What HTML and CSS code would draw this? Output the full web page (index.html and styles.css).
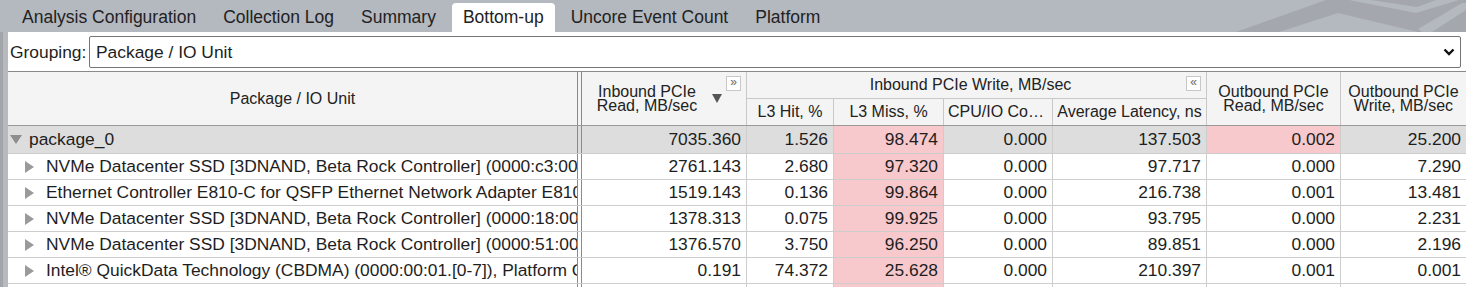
FILE: index.html
```html
<!DOCTYPE html>
<html>
<head>
<meta charset="utf-8">
<link rel="stylesheet" href="styles.css">
</head>
<body>
<div class="tabbar">
  <div class="tabs">
    <div class="tab">Analysis Configuration</div>
    <div class="tab">Collection Log</div>
    <div class="tab">Summary</div>
    <div class="tab active">Bottom-up</div>
    <div class="tab">Uncore Event Count</div>
    <div class="tab">Platform</div>
  </div>
  <svg class="decor" width="230" height="32" viewBox="0 0 230 32">
    <polygon points="0,32 90,0 230,0 230,32" fill="#a4a7ae"/>
    <polygon points="43,32 102,13 182,32" fill="#b4b8bf"/>
    <polygon points="113,0 180,13 223,0 200,0 181,7 135,0" fill="#b4b8bf"/>
    <polygon points="182,29 226,3 230,3 230,10 196,32 186,32" fill="#b4b8bf"/>
  </svg>
</div>
<div class="main">
  <div class="grouping">
    <span class="glabel">Grouping:</span>
    <div class="select">
      <span>Package / IO Unit</span>
      <svg class="chev" width="12" height="8" viewBox="0 0 12 8"><polyline points="1.5,1.5 6,6 10.5,1.5" fill="none" stroke="#111" stroke-width="2.4"/></svg>
    </div>
  </div>

  <div class="grid head">
    <div class="h tree-h">Package / IO Unit</div>
    <div class="h spacer-h"></div>
    <div class="h inb-h">
      <div class="htext">Inbound PCIe<br>Read, MB/sec</div>
      <svg class="sort" width="10" height="9" viewBox="0 0 10 9"><polygon points="0,0 10,0 5,9" fill="#555"/></svg>
      <span class="hbtn exp">»</span>
    </div>
    <div class="h grp-h">
      <span class="gtext">Inbound PCIe Write, MB/sec</span>
      <span class="hbtn col">«</span>
    </div>
    <div class="h sub c4">L3 Hit, %</div>
    <div class="h sub c5">L3 Miss, %</div>
    <div class="h sub c6 ell">CPU/IO Conflicts, %</div>
    <div class="h sub c7">Average Latency, ns</div>
    <div class="h out-h c8"><div class="htext">Outbound PCIe<br>Read, MB/sec</div></div>
    <div class="h out-h c9 last"><div class="htext">Outbound PCIe<br>Write, MB/sec</div></div>
  </div>

  <div class="grid row pkg">
    <div class="tree"><svg class="tri-down" width="12" height="9" viewBox="0 0 12 9"><polygon points="0,0 12,0 6,9" fill="#8e8e8e"/></svg>package_0</div>
    <div class="sp"></div>
    <div class="n first">7035.360</div><div class="n">1.526</div><div class="n pink">98.474</div><div class="n">0.000</div><div class="n">137.503</div><div class="n pink">0.002</div><div class="n last">25.200</div>
  </div>
  <div class="grid row">
    <div class="tree child"><svg class="tri-right" width="9" height="12" viewBox="0 0 9 12"><polygon points="0,0 9,6 0,12" fill="#9a9a9a"/></svg>NVMe Datacenter SSD [3DNAND, Beta Rock Controller] (0000:c3:00.0)</div>
    <div class="sp"></div>
    <div class="n first">2761.143</div><div class="n">2.680</div><div class="n pink">97.320</div><div class="n">0.000</div><div class="n">97.717</div><div class="n">0.000</div><div class="n last">7.290</div>
  </div>
  <div class="grid row">
    <div class="tree child"><svg class="tri-right" width="9" height="12" viewBox="0 0 9 12"><polygon points="0,0 9,6 0,12" fill="#9a9a9a"/></svg>Ethernet Controller E810-C for QSFP Ethernet Network Adapter E810-C-Q2</div>
    <div class="sp"></div>
    <div class="n first">1519.143</div><div class="n">0.136</div><div class="n pink">99.864</div><div class="n">0.000</div><div class="n">216.738</div><div class="n">0.001</div><div class="n last">13.481</div>
  </div>
  <div class="grid row">
    <div class="tree child"><svg class="tri-right" width="9" height="12" viewBox="0 0 9 12"><polygon points="0,0 9,6 0,12" fill="#9a9a9a"/></svg>NVMe Datacenter SSD [3DNAND, Beta Rock Controller] (0000:18:00.0)</div>
    <div class="sp"></div>
    <div class="n first">1378.313</div><div class="n">0.075</div><div class="n pink">99.925</div><div class="n">0.000</div><div class="n">93.795</div><div class="n">0.000</div><div class="n last">2.231</div>
  </div>
  <div class="grid row">
    <div class="tree child"><svg class="tri-right" width="9" height="12" viewBox="0 0 9 12"><polygon points="0,0 9,6 0,12" fill="#9a9a9a"/></svg>NVMe Datacenter SSD [3DNAND, Beta Rock Controller] (0000:51:00.0)</div>
    <div class="sp"></div>
    <div class="n first">1376.570</div><div class="n">3.750</div><div class="n pink">96.250</div><div class="n">0.000</div><div class="n">89.851</div><div class="n">0.000</div><div class="n last">2.196</div>
  </div>
  <div class="grid row">
    <div class="tree child"><svg class="tri-right" width="9" height="12" viewBox="0 0 9 12"><polygon points="0,0 9,6 0,12" fill="#9a9a9a"/></svg>Intel® QuickData Technology (CBDMA) (0000:00:01.[0-7]), Platform Controller</div>
    <div class="sp"></div>
    <div class="n first">0.191</div><div class="n">74.372</div><div class="n pink">25.628</div><div class="n">0.000</div><div class="n">210.397</div><div class="n">0.001</div><div class="n last">0.001</div>
  </div>
  <div class="grid row tail">
    <div class="tree child"></div>
    <div class="sp"></div>
    <div class="n first"></div><div class="n"></div><div class="n pink"></div><div class="n"></div><div class="n"></div><div class="n"></div><div class="n last"></div>
  </div>
</div>
</body>
</html>
```

FILE: styles.css
```css
* { box-sizing: border-box; }
html, body { margin: 0; padding: 0; }
body {
  font-family: "Liberation Sans", Arial, sans-serif;
  color: #1e1e1e;
  background: #ffffff;
  overflow: hidden;
  width: 1466px;
  height: 287px;
}
.tabbar {
  position: relative;
  height: 32px;
  background: #b4b8bf;
  overflow: hidden;
}
.tabs {
  display: flex;
  align-items: flex-end;
  height: 32px;
  padding-left: 11px;
  position: relative;
  z-index: 1;
}
.tab {
  font-size: 17.5px;
  height: 29px;
  line-height: 29px;
  padding: 0 11px;
  margin-right: 5px;
  color: #222;
  white-space: nowrap;
}
.tab.active {
  background: #ffffff;
  border-radius: 4px 4px 0 0;
}
.decor {
  position: absolute;
  right: 0;
  top: 0;
}
.main {
  padding-left: 8px;
  background: linear-gradient(to right, #a2a5aa 0, #a2a5aa 3px, #b6b9be 3px, #b6b9be 8px, #ffffff 8px);
  height: 255px;
  overflow: hidden;
}
.grouping {
  display: flex;
  align-items: flex-start;
  height: 40px;
  background: #ffffff;
  border-bottom: 1px solid #8a8a8a;
  padding: 4px 5px 0 2px;
}
.glabel {
  font-size: 17.4px;
  line-height: 32px;
  width: 79px;
  flex: none;
}
.select {
  flex: 1;
  height: 32px;
  border: 1px solid #767676;
  border-radius: 2px;
  display: flex;
  align-items: center;
  justify-content: space-between;
  padding: 0 5px 0 6px;
  font-size: 17.4px;
}

.grid {
  display: grid;
  grid-template-columns: 570px 3px 166px 87px 110px 109px 154px 134px 1fr;
  background: #ffffff;
}
.head {
  grid-template-rows: 27px 26px;
  background: #f4f4f4;
  border-bottom: 1px solid #9a9a9a;
  font-size: 16px;
}
.h {
  display: flex;
  align-items: center;
  justify-content: center;
  border-right: 1px solid #c8c8c8;
  white-space: nowrap;
  overflow: hidden;
  color: #222;
}
.tree-h { grid-column: 1; grid-row: 1 / 3; border-right: 1px solid #8a8a8a; }
.spacer-h { grid-column: 2; grid-row: 1 / 3; border-right: none; }
.inb-h {
  grid-column: 3; grid-row: 1 / 3;
  border-left: 1px solid #8a8a8a;
  position: relative;
  padding-right: 24px;
}
.htext { line-height: 14px; text-align: center; padding-top: 1px; }
.inb-h .htext { flex: 1; }
.sort { flex: none; }
.hbtn {
  position: absolute;
  top: 4px;
  width: 15px;
  height: 15px;
  border: 1px solid #c8c8c8;
  background: #ffffff;
  color: #666;
  font-size: 12px;
  line-height: 11px;
  text-align: center;
}
.exp { right: 5px; }
.grp-h {
  grid-column: 4 / 8; grid-row: 1;
  border-bottom: 1px solid #c8c8c8;
  position: relative;
  padding-right: 12px;
  padding-bottom: 1px;
}
.col { right: 5px; top: 4px; }
.sub { grid-row: 2; }
.c4 { grid-column: 4; }
.c5 { grid-column: 5; }
.c6 { grid-column: 6; }
.c7 { grid-column: 7; }
.c8 { grid-column: 8; grid-row: 1 / 3; }
.c9 { grid-column: 9; grid-row: 1 / 3; }
.ell {
  display: block;
  text-overflow: ellipsis;
  line-height: 26px;
  padding: 0 3px 0 4px;
  text-align: left;
}
.last { border-right: none; }

.row {
  height: 26px;
  border-bottom: 1px solid #cdcdcd;
  font-size: 17.4px;
}
.row.pkg { height: 28px; background: #dddddd; }
.row > div { border-right: 1px solid #cdcdcd; }
.tree {
  display: flex;
  align-items: center;
  white-space: nowrap;
  overflow: hidden;
  border-right: 1px solid #8a8a8a !important;
  padding-left: 2px;
}
.tree.child { padding-left: 17px; }
.tri-down { margin-right: 7px; flex: none; }
.tri-right { margin-right: 12px; flex: none; }
.row > .sp { border-right: none; }
.n {
  text-align: right;
  padding-right: 5px;
  line-height: 25px;
}
.pkg .n { line-height: 27px; }
.n.first { border-left: 1px solid #8a8a8a; }
.row > .n.last { border-right: none; }
.pink { background: #f7c9cc; }
```
